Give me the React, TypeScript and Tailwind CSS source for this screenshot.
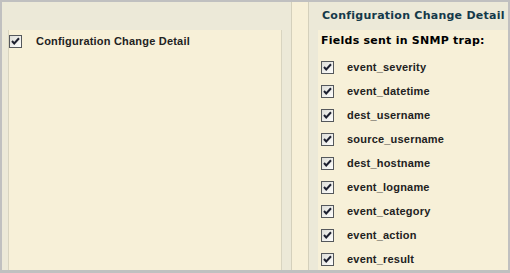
import React from "react";

const fields = [
  "event_severity",
  "event_datetime",
  "dest_username",
  "source_username",
  "dest_hostname",
  "event_logname",
  "event_category",
  "event_action",
  "event_result",
];

const Check = () => (
  <svg width="13" height="13" viewBox="0 0 13 13" className="shrink-0">
    <defs>
      <linearGradient id="cbg" x1="0" y1="0" x2="1" y2="1">
        <stop offset="0" stopColor="#dcdcd6" />
        <stop offset="1" stopColor="#ffffff" />
      </linearGradient>
    </defs>
    <rect x="0.5" y="0.5" width="12" height="12" fill="url(#cbg)" stroke="#55585c" />
    <path d="M3 6 L5.2 8.4 L10 3.2" fill="none" stroke="#1d2030" strokeWidth="2" />
  </svg>
);

const App = () => {
  return (
    <div className="w-[510px] h-[273px] bg-[#c0c0c0] pt-[2px] pl-[2px] pr-[2px] pb-[3px] font-['Liberation_Sans',Arial,sans-serif]">
      <div className="flex h-full">
        {/* left side */}
        <div className="w-[280px] h-full flex flex-col bg-[#ece9d8] pl-[6px] pt-[28px]">
          <div className="flex-1 bg-[#f7f0d8] border-l border-r border-[#d8d4c0]">
            <div className="flex items-center h-[13px] mt-[5px]">
              <Check />
              <span className="ml-[14px] text-[11px] font-bold tracking-[0.2px] text-[#222]">
                Configuration Change Detail
              </span>
            </div>
          </div>
        </div>
        {/* splitter */}
        <div className="w-[10px] h-full bg-[#ece9d8] border-r border-[#d4d0bc]" />
        <div className="w-[17px] h-full bg-[#f7f0d8] border-r border-[#d4d0bc]" />
        <div className="w-[9px] h-full bg-[#ece9d8]" />
        {/* right panel */}
        <div className="flex-1 h-full flex flex-col">
          <div className="h-[28px] bg-[#ece9d8] pl-[4px] pt-[8px]">
            <div className="font-['DejaVu_Sans',sans-serif] font-bold text-[11px] tracking-[0.25px] text-[#14394a] leading-[11px] whitespace-nowrap">
              Configuration Change Detail
            </div>
          </div>
          <div className="flex-1 bg-[#f7f0d8] pl-[3px] pt-[5px]">
            <div className="font-['DejaVu_Sans',sans-serif] font-bold text-[11px] tracking-[0.25px] text-black leading-[12px] whitespace-nowrap">
              Fields sent in SNMP trap:
            </div>
            <div className="flex flex-col gap-[11px] mt-[14px]">
              {fields.map((f) => (
                <div key={f} className="flex items-center h-[13px]">
                  <Check />
                  <span className="ml-[13px] text-[11px] font-bold tracking-[0.2px] text-[#222]">{f}</span>
                </div>
              ))}
            </div>
          </div>
        </div>
      </div>
    </div>
  );
};

export default App;
